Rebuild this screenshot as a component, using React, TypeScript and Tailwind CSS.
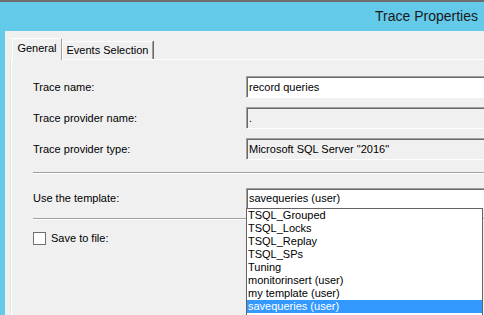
import React from "react";

const sunken =
  "border border-t-[#a0a0a0] border-l-[#a0a0a0] border-r-white border-b-white shadow-[inset_1px_1px_0_#696969]";

function Row({ label, children }: { label: string; children: React.ReactNode }) {
  return (
    <div className="flex items-center h-[22px]">
      <div className="w-[213px] shrink-0 text-[11px] leading-none text-black">{label}</div>
      {children}
    </div>
  );
}

function Sep() {
  return (
    <div className="w-[500px]">
      <div className="h-px bg-[#a0a0a0]" />
      <div className="h-px bg-white" />
    </div>
  );
}

export default function App() {
  const items = [
    "TSQL_Grouped",
    "TSQL_Locks",
    "TSQL_Replay",
    "TSQL_SPs",
    "Tuning",
    "monitorinsert (user)",
    "my template (user)",
    "savequeries (user)",
  ];
  return (
    <div className="w-[484px] h-[315px] overflow-hidden relative flex flex-col bg-[#f0f0f0] font-['Liberation_Sans',Arial,sans-serif]">
      <div className="h-[2px] bg-[#6e6e6e] shrink-0" />
      <div className="h-[29px] shrink-0 bg-[#63caea] flex items-center justify-end pr-[6px] text-[14px] text-[#1a1a1a]">
        Trace Properties
      </div>
      <div className="flex flex-1 min-h-0">
        <div className="w-[5px] bg-[#63caea] shrink-0" />
        <div className="flex-1 bg-[#f0f0f0] pl-[6px] pt-[7px] flex flex-col">
          {/* tabs */}
          <div className="flex items-end h-[21px] pl-px">
            <div className="relative z-10 h-[22px] -mb-px w-[50px] bg-[#f0f0f0] border-t border-l border-white border-r border-r-[#a0a0a0] flex items-start justify-center pt-[4px] text-[11px] leading-none text-black">
              General
            </div>
            <div className="h-[18px] w-[91px] border-t border-l border-white border-r border-r-[#a0a0a0] shadow-[1px_0_0_#696969] flex items-start justify-center pt-[3px] text-[11px] leading-none text-black">
              Events Selection
            </div>
          </div>
          {/* panel */}
          <div className="flex-1 border-t border-l border-white shadow-[-1px_0_0_#e3e3e3] pl-[21px] pt-[16px] flex flex-col">
            <Row label="Trace name:">
              <div className={`${sunken} w-[260px] h-[22px] shrink-0 bg-white flex items-center pl-[2px] text-[11px] text-black`}>
                record queries
              </div>
            </Row>
            <div className="h-[9px]" />
            <Row label="Trace provider name:">
              <div className={`${sunken} w-[260px] h-[22px] shrink-0 bg-[#f0f0f0] flex items-center pl-[2px] text-[11px] text-black`}>
                .
              </div>
            </Row>
            <div className="h-[9px]" />
            <Row label="Trace provider type:">
              <div className={`${sunken} w-[260px] h-[22px] shrink-0 bg-[#f0f0f0] flex items-center pl-[2px] text-[11px] text-black`}>
                Microsoft SQL Server "2016"
              </div>
            </Row>
            <div className="h-[12px]" />
            <Sep />
            <div className="h-[14px]" />
            <div className="flex items-center h-[21px]">
              <div className="w-[213px] shrink-0 text-[11px] leading-none text-black">Use the template:</div>
              <div className="relative shrink-0">
                <div className={`${sunken} w-[260px] h-[21px] bg-white flex items-center pl-[2px] text-[11px] text-black`}>
                  savequeries (user)
                </div>
                <div className="absolute z-20 left-0 top-[20px] w-[237px] h-[110px] bg-white border border-[#646464] pt-0">
                  {items.map((it, i) => (
                    <div
                      key={it}
                      className={`h-[13px] flex items-center pl-px text-[11px] leading-none ${
                        i === items.length - 1 ? "bg-[#3399ff] text-white" : "text-black"
                      }`}
                    >
                      {it}
                    </div>
                  ))}
                </div>
              </div>
            </div>
            <div className="h-[9px]" />
            <Sep />
            <div className="h-[12px]" />
            <div className="flex items-center h-[13px]">
              <div className="w-[13px] h-[13px] border border-[#707070] bg-white shrink-0" />
              <div className="ml-[5px] text-[11px] leading-none text-black">Save to file:</div>
            </div>
          </div>
        </div>
      </div>
    </div>
  );
}
